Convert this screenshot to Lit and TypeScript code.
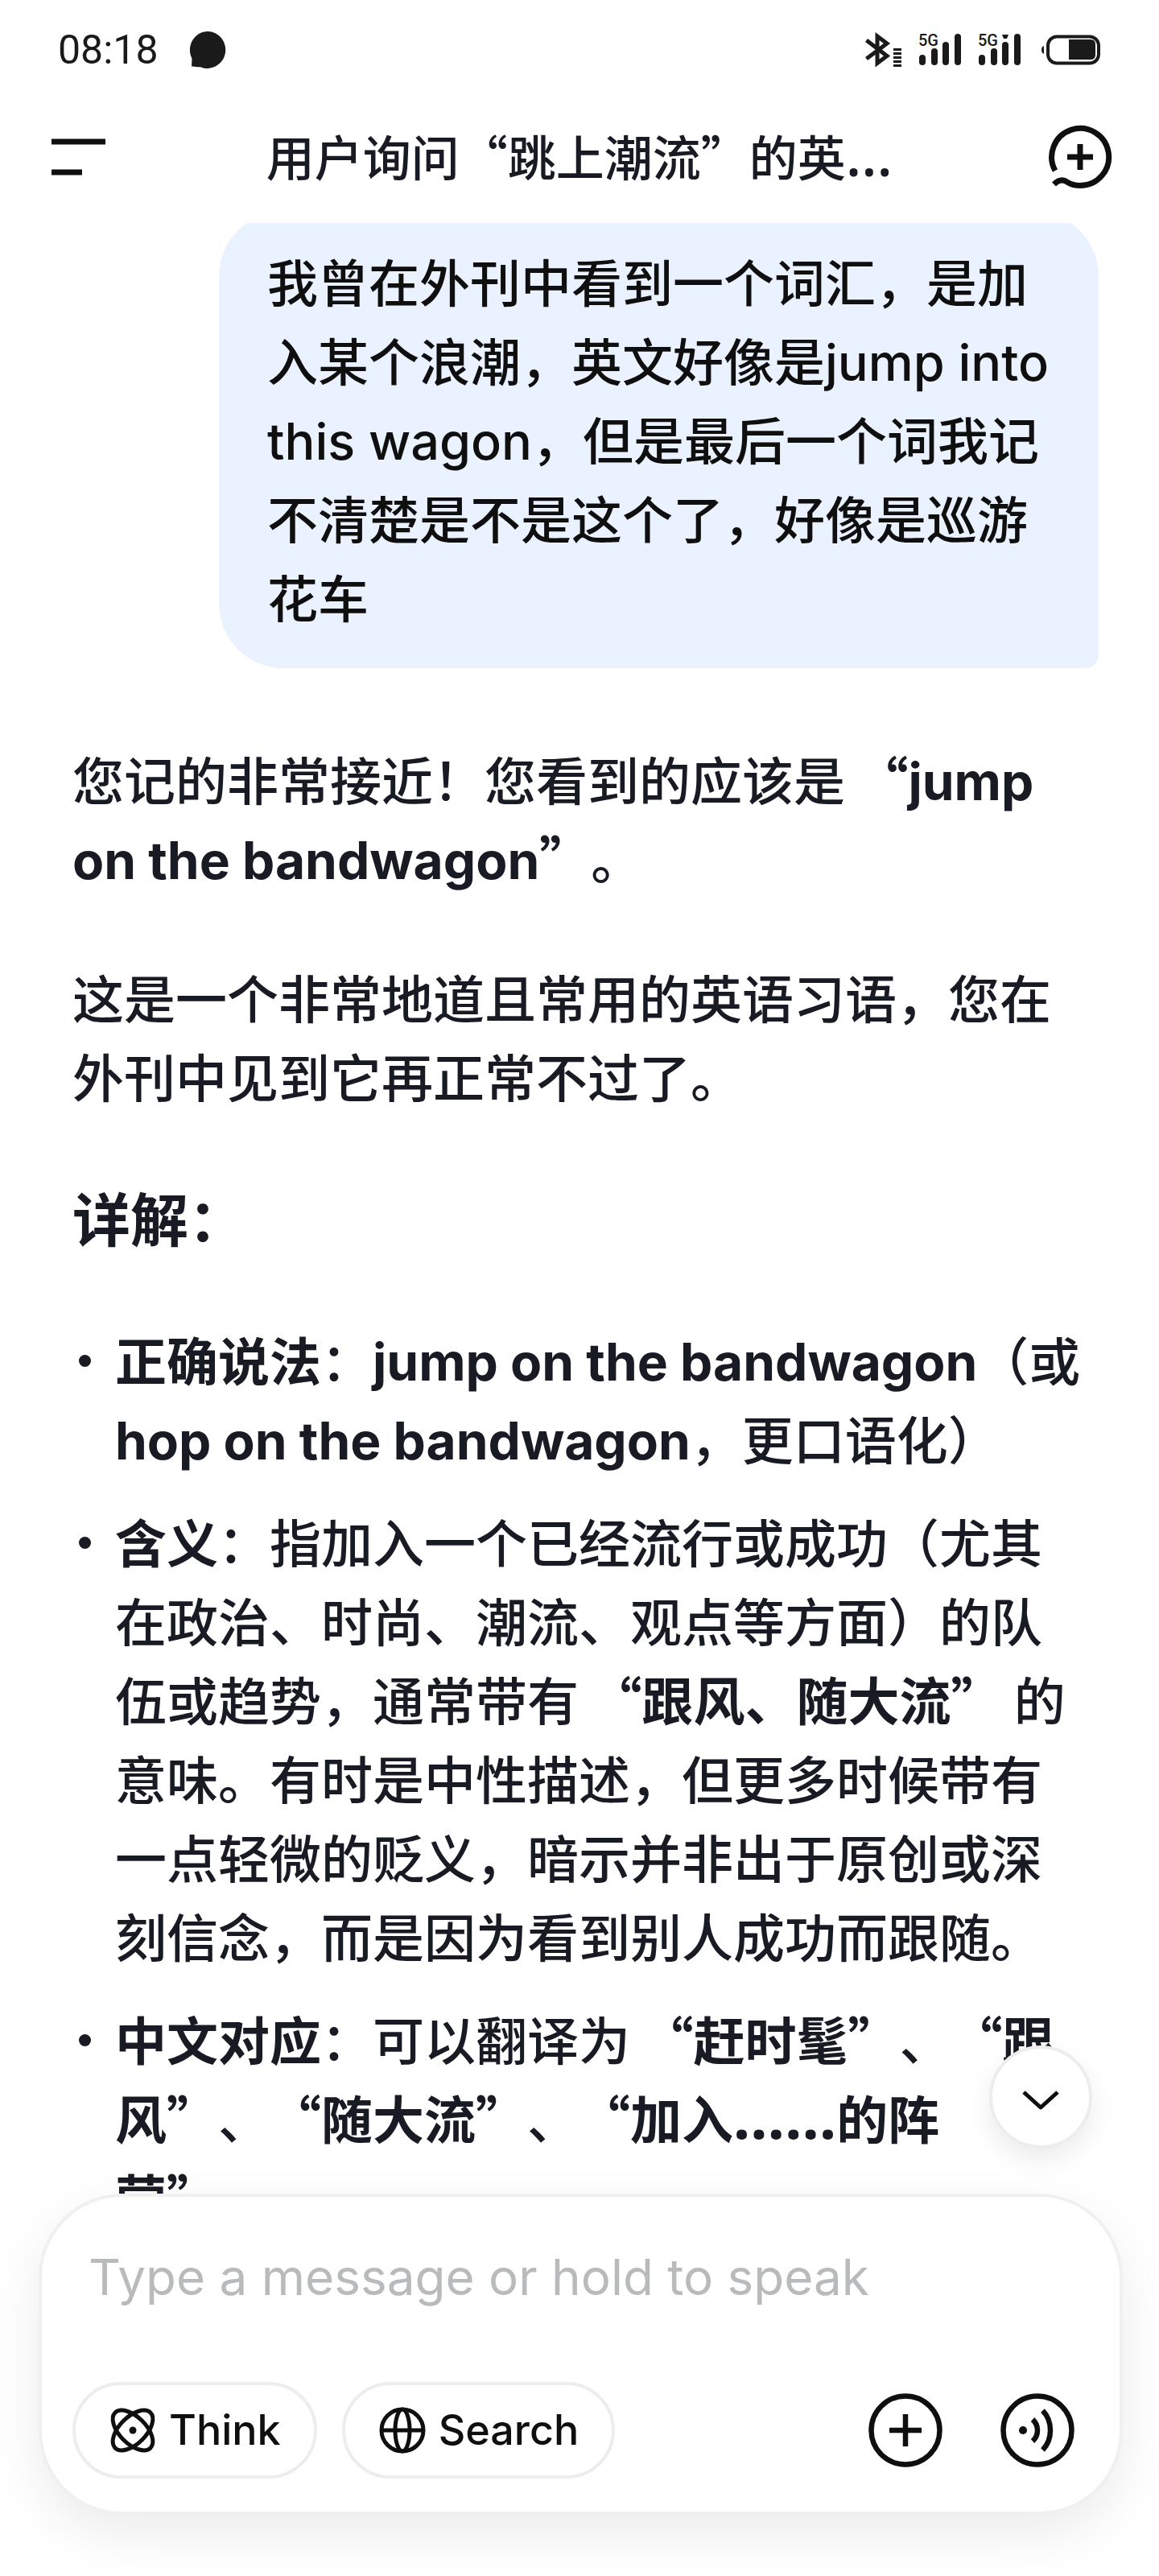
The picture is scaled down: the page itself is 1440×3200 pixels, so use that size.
import { LitElement, css, html, svg } from "lit";
import { customElement, state } from "lit/decorators.js";

const signal = (x: number, roaming: boolean) => svg`
  <text x=${x - 1} y="27" class="net">5G</text>
  <rect x=${x} y="38" width="8" height="13" rx="4" />
  <rect x=${x + 15} y="30" width="8" height="21" rx="4" />
  <rect x=${x + 29} y="22" width="8" height="29" rx="4" />
  <rect x=${x + 44} y="12" width="8" height="39" rx="4" />
  ${roaming ? svg`<path d="M${x + 29} 13h8l-2 5h-4z" />` : null}
`;

@customElement("status-bar")
class StatusBar extends LitElement {
  static styles = css`
    :host {
      display: flex;
      align-items: center;
      justify-content: space-between;
      height: 124px;
      padding: 0 72px;
      box-sizing: border-box;
      color: #1a1a1a;
    }
    .left {
      display: flex;
      align-items: center;
      gap: 36px;
    }
    .time {
      font: 400 50px/60px Roboto, sans-serif;
    }
    .icon {
      display: block;
      fill: currentColor;
    }
    .net {
      font: 500 20px Roboto, sans-serif;
    }
  `;

  render() {
    return html`
      <div class="left">
        <time class="time">08:18</time>
        <svg class="icon" width="48" height="48" viewBox="0 0 48 48" aria-hidden="true">
          <path d="M25 1a22.500 23 0 1 1-9 44.200q-4 .6-11-1l.5-9.500A22.500 23 0 0 1 25 1z" />
        </svg>
      </div>
      <svg class="icon" width="296" height="64" viewBox="0 0 296 64" aria-hidden="true">
        <path d="M4.500 20 30 39.500 18 48.500V15L30 24 4.500 43" fill="none" stroke="currentColor" stroke-width="5" />
        <path d="M38 30h10v3H38zM38 35h10v3H38zM38 40h10v3H38zM38 45h10v3H38zM38 50h10v3H38z" />
        ${signal(70, false)} ${signal(144, true)}
        <path d="M225 27v10q-3-1-3-5t3-5z" />
        <rect x="230" y="15.500" width="63" height="33" rx="11" fill="none" stroke="currentColor" stroke-width="4" />
        <path d="M256 19h27q6 0 6 6v13q0 6-6 6h-27z" />
      </svg>
    `;
  }
}

@customElement("top-bar")
class TopBar extends LitElement {
  static styles = css`
    :host {
      display: flex;
      align-items: center;
      justify-content: space-between;
      height: 142px;
      margin-bottom: 11px;
      padding: 0 56px;
      box-sizing: border-box;
    }
    .action {
      display: flex;
      padding: 0;
      border: 0;
      background: none;
      color: #0f0f0f;
    }
    .title {
      margin: 0;
      padding-bottom: 4px;
      color: #191b24;
      font: 500 60px/80px "Noto Sans CJK SC", sans-serif;
      text-spacing-trim: space-all;
      white-space: nowrap;
    }
    .dots {
      font-family: "Noto Sans", sans-serif;
      font-size: 72px;
      line-height: 0;
    }
  `;

  render() {
    return html`
      <button class="action" aria-label="Menu">
        <svg width="84" height="84" viewBox="0 0 84 84">
          <path d="M8 23h67M8 61h38" stroke="currentColor" stroke-width="7" />
        </svg>
      </button>
      <h1 class="title">用户询问“跳上潮流”的英<span class="dots">…</span></h1>
      <button class="action" aria-label="New chat">
        <svg width="84" height="84" viewBox="-2 -2 84 84" fill="none" stroke="currentColor" stroke-width="7">
          <path d="M9 57A35.500 35.500 0 1 1 40 75.500C33 75.500 28.500 74 24.500 71.500C18.500 67 13 68.500 7.500 74M24 40h32M40 24v32" />
        </svg>
      </button>
    `;
  }
}

@customElement("chat-thread")
class ChatThread extends LitElement {
  static styles = css`
    :host {
      display: flex;
      flex-direction: column;
      gap: 87px;
      padding: 0 90px;
      color: #191b24;
      font: 500 64px/98px "Noto Sans CJK SC", sans-serif;
      text-spacing-trim: space-all;
      text-autospace: no-autospace;
    }
    .en {
      font-family: Inter, sans-serif;
      line-height: 0;
    }
    .dots {
      font-family: "Noto Sans", sans-serif;
      font-size: 75px;
      line-height: 0;
    }
    .mine {
      align-self: flex-end;
      box-sizing: border-box;
      max-width: 1093px;
      margin: -14px -15px 0 0;
      padding: 36px 58px 41px 60px;
      border-radius: 80px 80px 16px 80px;
      background: #ebf2ff;
      color: #0f0f0f;
      font-size: 63px;
    }
    .reply {
      display: flex;
      flex-direction: column;
      gap: 75px;
    }
    .text,
    .heading {
      margin: 0;
    }
    .heading {
      font-size: 72px;
      line-height: 104px;
      font-weight: 700;
    }
    .points {
      display: flex;
      flex-direction: column;
      gap: 30px;
      margin: 0;
      padding: 0;
      list-style: none;
    }
    .point {
      display: flex;
      gap: 30px;
    }
    .point::before {
      content: "";
      flex: none;
      width: 15px;
      height: 15px;
      margin: 45px 0 0 8px;
      border-radius: 50%;
      background: currentColor;
    }
    strong {
      font-weight: 700;
    }
  `;

  render() {
    return html`
      <div class="mine" lang="zh-CN">
        我曾在外刊中看到一个词汇，是加入某个浪潮，英文好像是<span class="en">jump into this wagon</span>，但是最后一个词我记不清楚是不是这个了，好像是巡游花车
      </div>
      <article class="reply" lang="zh-CN">
        <p class="text">
          您记的非常接近！您看到的应该是 <strong>“<span class="en">jump on the bandwagon</span>”</strong>。
        </p>
        <p class="text">这是一个非常地道且常用的英语习语，您在外刊中见到它再正常不过了。</p>
        <h2 class="heading">详解：</h2>
        <ul class="points">
          <li class="point">
            <div>
              <strong>正确说法</strong>：<strong class="en">jump on the bandwagon</strong>（或<strong class="en"> hop on the bandwagon</strong>，更口语化）
            </div>
          </li>
          <li class="point">
            <div>
              <strong>含义</strong>：指加入一个已经流行或成功（尤其在政治、时尚、潮流、观点等方面）的队伍或趋势，通常带有
              <strong>“跟风、随大流”</strong>
              的意味。有时是中性描述，但更多时候带有一点轻微的贬义，暗示并非出于原创或深刻信念，而是因为看到别人成功而跟随。
            </div>
          </li>
          <li class="point">
            <div>
              <strong>中文对应</strong>：可以翻译为
              <strong>“赶时髦”</strong>、<strong>“跟风”</strong>、<strong>“随大流”</strong>、<strong>“加入<span class="dots">……</span>的阵营”</strong>。
            </div>
          </li>
        </ul>
      </article>
    `;
  }
}

@customElement("message-composer")
class MessageComposer extends LitElement {
  static styles = css`
    :host {
      display: flex;
      flex-direction: column;
      justify-content: space-between;
      gap: 82px;
      box-sizing: border-box;
      padding: 52px 42px 41px;
      border: 4px solid #f0f0f0;
      border-radius: 104px;
      background: #fff;
      box-shadow: 0 24px 64px rgba(0, 0, 0, 0.08);
      color: #0f0f0f;
      font-family: Inter, sans-serif;
    }
    .field {
      width: 100%;
      height: 96px;
      box-sizing: border-box;
      padding: 0 16px;
      border: 0;
      outline: 0;
      background: none;
      color: inherit;
      font: 400 62px/96px Inter, sans-serif;
    }
    .field::placeholder {
      color: #b8babc;
      opacity: 1;
    }
    .tools {
      display: flex;
      align-items: center;
      margin-left: -4px;
    }
    .pill {
      display: flex;
      align-items: center;
      gap: 15px;
      height: 120px;
      margin-right: 31px;
      padding: 0 41px;
      box-sizing: border-box;
      border: 4px solid #ededed;
      border-radius: 60px;
      background: #fff;
      color: inherit;
      font: 500 52px/64px Inter, sans-serif;
    }
    .round {
      display: flex;
      margin-left: 72px;
      padding: 0;
      border: 0;
      background: none;
      color: inherit;
    }
    .push {
      margin-left: auto;
    }
    .end {
      margin-right: 14px;
    }
    .line {
      fill: none;
      stroke: currentColor;
    }
  `;

  render() {
    return html`
      <input class="field" type="text" aria-label="Message" placeholder="Type a message or hold to speak" />
      <div class="tools">
        <button class="pill" aria-pressed="false">
          <svg class="line" width="60" height="60" viewBox="-30 -30 60 60" stroke-width="5" aria-hidden="true">
            <ellipse rx="31" ry="16.500" transform="rotate(45)" />
            <ellipse rx="31" ry="16.500" transform="rotate(-45)" />
            <circle r="4.500" fill="currentColor" stroke="none" />
          </svg>
          Think
        </button>
        <button class="pill" aria-pressed="false">
          <svg class="line" width="60" height="60" viewBox="-30 -30 60 60" stroke-width="5" aria-hidden="true">
            <circle r="26" />
            <ellipse rx="9" ry="26" />
            <path d="M-26 0h52" />
          </svg>
          Search
        </button>
        <button class="round push" aria-label="Attach">
          <svg class="line" width="92" height="92" viewBox="0 0 92 92" stroke-width="6.500">
            <circle cx="46" cy="46" r="42.500" />
            <path d="M26 46h40M46 26v40" />
          </svg>
        </button>
        <button class="round end" aria-label="Voice">
          <svg class="line" width="92" height="92" viewBox="0 0 92 92" stroke-width="6.500">
            <circle cx="46" cy="46" r="42.500" />
            <circle cx="28" cy="46" r="5" fill="currentColor" stroke="none" />
            <path d="M40 32.500Q46 38 46 46T40 59.500M52.500 21.500Q62 31.500 62 46T52.500 70.500" />
          </svg>
        </button>
      </div>
    `;
  }
}

@customElement("app-root")
class AppRoot extends LitElement {
  @state() private atBottom = false;

  static styles = css`
    :host {
      display: flex;
      flex-direction: column;
      height: 100vh;
      overflow: hidden;
      background: #fff;
    }
    .frame {
      position: relative;
      display: flex;
      flex: 1;
      min-height: 0;
    }
    .scroll {
      flex: 1;
      overflow: hidden;
    }
    .down {
      position: absolute;
      right: 83px;
      bottom: 56px;
      display: flex;
      align-items: center;
      justify-content: center;
      width: 128px;
      height: 128px;
      padding: 0;
      border: 4px solid #ededed;
      border-radius: 50%;
      background: #fff;
      box-shadow: 0 14px 32px rgba(0, 0, 0, 0.08);
      color: #0f0f0f;
    }
    .composer {
      margin: 0 45px 76px 48px;
    }
  `;

  render() {
    return html`
      <status-bar></status-bar>
      <top-bar></top-bar>
      <div class="frame">
        <main class="scroll"><chat-thread></chat-thread></main>
        ${this.atBottom
          ? null
          : html`<button class="down" aria-label="Scroll to bottom">
              <svg width="48" height="32" viewBox="0 0 48 32" fill="none" stroke="currentColor" stroke-width="5">
                <path d="M3 10 24 29 45 10" stroke-linejoin="round" />
              </svg>
            </button>`}
      </div>
      <message-composer class="composer"></message-composer>
    `;
  }
}
